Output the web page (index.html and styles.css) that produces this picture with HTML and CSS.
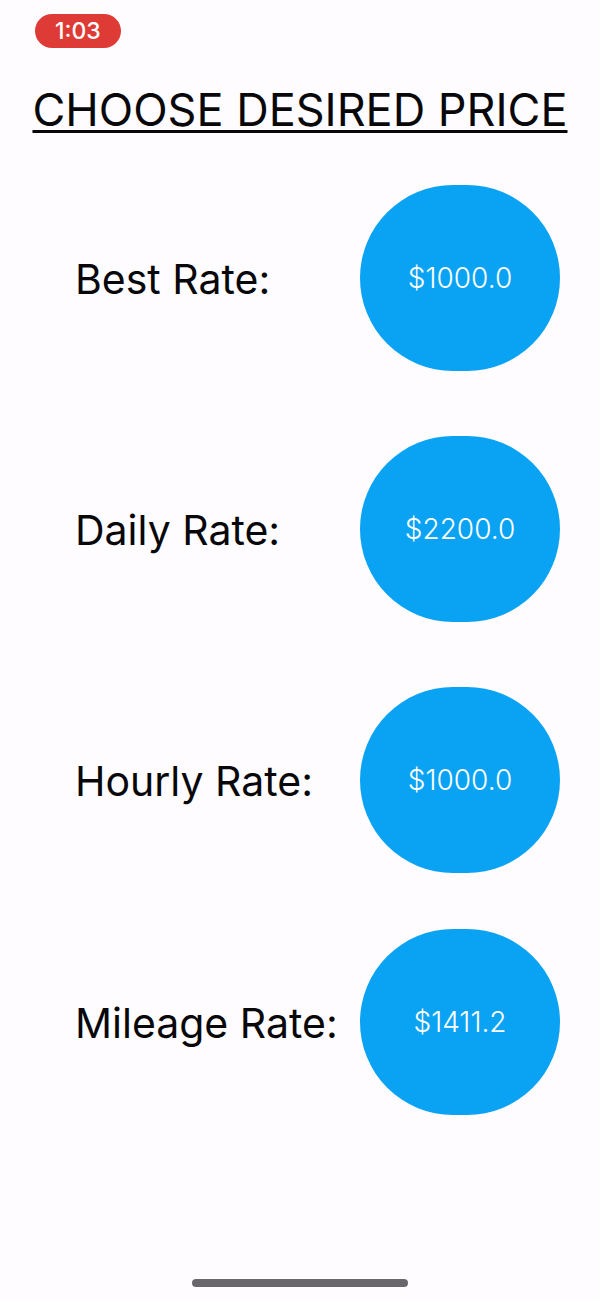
FILE: index.html
```html
<!DOCTYPE html>
<html lang="en">
<head>
<meta charset="utf-8">
<meta name="viewport" content="width=device-width, initial-scale=1">
<title>Choose Desired Price</title>
<link rel="stylesheet" href="styles.css">
</head>
<body>
<div class="screen">
  <header class="status"><span class="clock">1:03</span></header>
  <main class="content">
    <h1 class="title">CHOOSE DESIRED PRICE</h1>
    <div class="rates">
      <div class="rate"><label class="name" for="best">Best Rate:</label><button class="price" id="best" type="button">$1000.0</button></div>
      <div class="rate"><label class="name" for="daily">Daily Rate:</label><button class="price" id="daily" type="button">$2200.0</button></div>
      <div class="rate"><label class="name" for="hourly">Hourly Rate:</label><button class="price" id="hourly" type="button">$1000.0</button></div>
      <div class="rate last"><label class="name" for="mileage">Mileage Rate:</label><button class="price" id="mileage" type="button">$1411.2</button></div>
    </div>
  </main>
  <footer class="home"><div class="bar"></div></footer>
</div>
</body>
</html>
```
FILE: styles.css
```css
* { box-sizing: border-box; }
body {
  margin: 0;
  background: #fefcff;
  color: #08080a;
  font-family: Inter, "Liberation Sans", sans-serif;
}
.screen {
  min-height: 100vh;
  display: flex;
  flex-direction: column;
}
.status { padding: 14px 35px 0; display: flex; }
.clock {
  padding: 0 20px;
  border-radius: 17px;
  background: #de3b36;
  color: #fff;
  font-size: 23px;
  font-weight: 500;
  line-height: 34px;
  text-align: center;
}
.content { flex: 1; }
.title {
  margin: 32px 0 0;
  font-size: 45px;
  font-weight: 400;
  line-height: 60px;
  text-align: center;
  white-space: nowrap;
  text-decoration: underline;
  text-decoration-thickness: 3px;
  text-underline-offset: 4px;
}
.rates {
  display: flex;
  flex-direction: column;
  gap: 65px;
  padding: 45px 40px 0 75px;
}
.rate {
  display: flex;
  align-items: center;
  justify-content: space-between;
}
.last { margin-top: -9px; }
.name { padding-top: 2px; font-size: 41px; line-height: 52px; white-space: nowrap; }
.price {
  flex: none;
  width: 200px;
  height: 186px;
  padding: 0;
  border: 0;
  border-radius: 93px;
  background: #0aa3f4;
  color: #fff;
  font-family: inherit;
  font-size: 28px;
  font-weight: 300;
}
.home { display: flex; justify-content: center; padding-bottom: 13px; }
.bar { width: 36%; height: 8px; border-radius: 4px; background: #69676b; }
```
